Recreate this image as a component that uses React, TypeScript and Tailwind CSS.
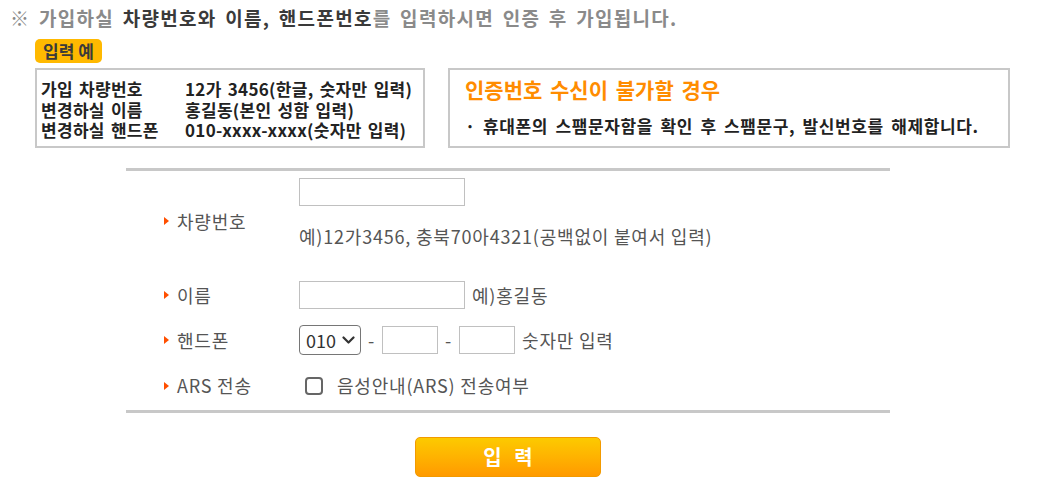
import { useState } from 'react'

const FONT = '[font-family:"Noto_Sans_CJK_KR","Noto_Sans",sans-serif]'

function Bullet() {
  return (
    <span className="mr-2 inline-block h-0 w-0 border-y-[4px] border-l-[5px] border-y-transparent border-l-[#ff4f00]" />
  )
}

function Row({
  label,
  height,
  children,
}: {
  label: string
  height: string
  children: React.ReactNode
}) {
  return (
    <div className={`flex items-center ${height}`}>
      <div className="flex w-[173px] shrink-0 items-center pl-[38px]">
        <Bullet />
        <span>{label}</span>
      </div>
      <div className="flex flex-1 items-center self-stretch">{children}</div>
    </div>
  )
}

export default function App() {
  const [ars, setArs] = useState(false)

  return (
    <div className={`${FONT} w-[1045px] bg-white pl-[10px] pt-[6px]`}>
      <p className="text-[19px] leading-[24px] font-bold tracking-[1.3px] text-[#8a8a8a] [word-spacing:3px]">
        ※ 가입하실 <span className="text-[#3a3a3a]">차량번호와 이름, 핸드폰번호</span>를 입력하시면 인증 후 가입됩니다.
      </p>

      <div className="ml-[25px] mt-[9px]">
        <span className="inline-flex h-[24px] w-[67px] items-center justify-center rounded-[5px] bg-[#ffb900] text-[17px] font-bold text-[#3a3a3a]">
          입력 예
        </span>

        <div className="mt-[5px] flex gap-[23px]">
          <div className="h-[80px] w-[390px] border-2 border-[#c8c8c8] pl-[4px] pt-[9px] text-[17px] leading-[20.5px] font-bold tracking-[0.3px] text-[#222] [word-spacing:2px]">
            <div className="flex">
              <span className="w-[144px]">가입 차량번호</span>
              <span>12가 3456(한글, 숫자만 입력)</span>
            </div>
            <div className="flex">
              <span className="w-[144px]">변경하실 이름</span>
              <span>홍길동(본인 성함 입력)</span>
            </div>
            <div className="flex">
              <span className="w-[144px]">변경하실 핸드폰</span>
              <span>010-xxxx-xxxx(숫자만 입력)</span>
            </div>
          </div>

          <div className="h-[80px] w-[562px] border-2 border-[#c8c8c8] pl-[15px] pt-[7px]">
            <div className="text-[21px] leading-[24px] font-bold text-[#ff8c00] [word-spacing:3px]">
              인증번호 수신이 불가할 경우
            </div>
            <div className="mt-[15px] text-[17px] leading-[20px] font-bold tracking-[0.6px] text-[#222] [word-spacing:3px]">
              · 휴대폰의 스팸문자함을 확인 후 스팸문구, 발신번호를 해제합니다.
            </div>
          </div>
        </div>
      </div>

      <form
        className="ml-[116px] mt-[20px] w-[764px] border-y-[3px] border-[#c8c8c8] text-[18px] tracking-[0.8px] text-[#555]"
        onSubmit={(e) => e.preventDefault()}
      >
        <Row label="차량번호" height="h-[100px]">
          <div className="flex flex-col self-start pt-[7px]">
            <input className="h-[28px] w-[166px] border border-[#c0c0c0] px-1 outline-none" />
            <span className="mt-[19px] leading-[22px]">예)12가3456, 충북70아4321(공백없이 붙여서 입력)</span>
          </div>
        </Row>

        <Row label="이름" height="h-[48px]">
          <div className="flex items-center">
            <input className="h-[28px] w-[166px] border border-[#c0c0c0] px-1 outline-none" />
            <span className="ml-[7px]">예)홍길동</span>
          </div>
        </Row>

        <Row label="핸드폰" height="h-[42px]">
          <div className="flex items-center">
            <div className="relative">
              <select className="h-[30px] w-[62px] appearance-none rounded-[4px] border border-[#767676] bg-white pl-[6px] text-[18px] tracking-normal text-[#333] outline-none">
                <option>010</option>
                <option>011</option>
                <option>016</option>
                <option>017</option>
                <option>019</option>
              </select>
              <svg
                className="pointer-events-none absolute right-[6px] top-[11px]"
                width="13"
                height="8"
                viewBox="0 0 13 8"
                fill="none"
              >
                <path d="M1.5 1.5L6.5 6.5L11.5 1.5" stroke="#333" strokeWidth="2.2" strokeLinecap="round" strokeLinejoin="round" />
              </svg>
            </div>
            <span className="mx-[7px]">-</span>
            <input className="h-[28px] w-[56px] border border-[#c0c0c0] px-1 outline-none" />
            <span className="mx-[7px]">-</span>
            <input className="h-[28px] w-[56px] border border-[#c0c0c0] px-1 outline-none" />
            <span className="ml-[7px]">숫자만 입력</span>
          </div>
        </Row>

        <Row label="ARS 전송" height="h-[49px]">
          <label className="ml-[6px] flex items-center">
            <input
              type="checkbox"
              checked={ars}
              onChange={(e) => setArs(e.target.checked)}
              className="m-0 h-[18px] w-[18px] appearance-none rounded-[4px] border-2 border-[#666] bg-white checked:bg-[#666]"
            />
            <span className="ml-[14px]">음성안내(ARS) 전송여부</span>
          </label>
        </Row>
      </form>

      <div className="ml-[116px] flex w-[764px] justify-center pt-[24px] pb-[8px]">
        <button
          type="button"
          className="h-[40px] w-[186px] rounded-[5px] border border-[#f29a00] bg-gradient-to-b from-[#fcca00] to-[#ff9a00] pl-[4px] text-[20px] font-bold tracking-[4px] text-white"
        >
          입 력
        </button>
      </div>
    </div>
  )
}
